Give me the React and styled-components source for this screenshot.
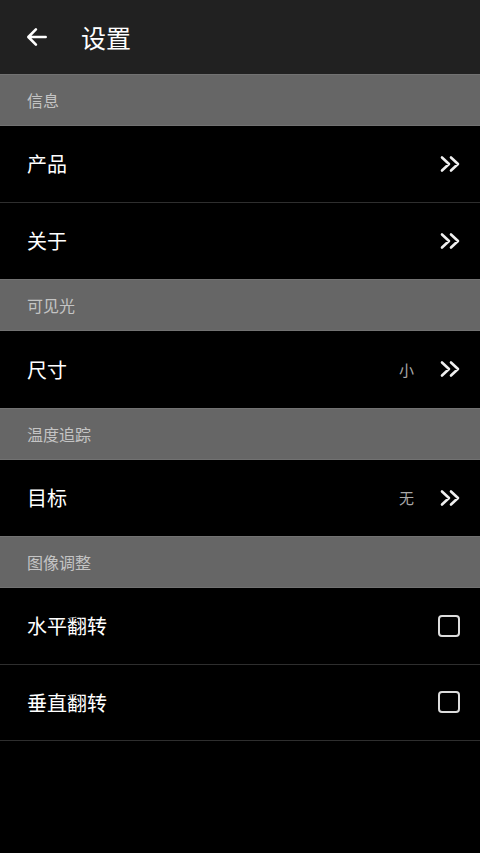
import React from "react";
import styled, { createGlobalStyle } from "styled-components";

const Global = createGlobalStyle`
  html, body { margin: 0; padding: 0; background: #000; }
  body { font-family: "Noto Sans CJK SC", "Noto Sans", sans-serif; }
  #root { min-height: 853px; background: #000; }
`;

const Page = styled.div`
  width: 480px;
  min-height: 853px;
  background: #000;
  display: flex;
  flex-direction: column;
`;

const Header = styled.header`
  height: 74px;
  background: #212121;
  display: flex;
  align-items: center;
  padding-left: 24px;
  gap: 31px;
  box-sizing: border-box;
`;

const Title = styled.h1`
  margin: 0;
  color: #fff;
  font-size: 25px;
  font-weight: 400;
  line-height: 1;
`;

const Section = styled.div`
  height: 52px;
  box-sizing: border-box;
  background: #666;
  border-top: 1px solid #727272;
  border-bottom: 1px solid #727272;
  display: flex;
  align-items: center;
  padding-left: 27px;
  color: #c4c4c4;
  font-size: 16px;
`;

const Row = styled.div`
  height: 76.5px;
  box-sizing: border-box;
  display: flex;
  align-items: center;
  padding: 0 17px 0 27px;
  border-bottom: ${(p) => (p.$last ? "none" : "1px solid #2e2e2e")};
  color: #fff;
  font-size: 20px;
`;

const Label = styled.span`
  flex: 1;
`;

const Value = styled.span`
  color: #a8a8a8;
  font-size: 15px;
  margin-right: 25px;
`;

const BackIcon = () => (
  <svg width="26" height="26" viewBox="0 0 24 24" fill="none" stroke="#fff" strokeWidth="2.4" strokeLinecap="round" strokeLinejoin="round">
    <path d="M20 12H4.5M11 5l-7 7 7 7" />
  </svg>
);

const Chevrons = () => (
  <svg width="24" height="18" viewBox="0 0 24 18" fill="none" stroke="#f0f0f0" strokeWidth="2.6" strokeLinecap="round" strokeLinejoin="round">
    <path d="M3 2.5l7 6.5-7 6.5M12 2.5l7 6.5-7 6.5" />
  </svg>
);

const Box = styled.span`
  width: 18px;
  height: 18px;
  border: 2px solid #dcdcdc;
  border-radius: 4px;
  margin-right: 3px;
`;

const data = [
  { section: "信息", rows: [{ label: "产品" }, { label: "关于" }] },
  { section: "可见光", rows: [{ label: "尺寸", value: "小" }] },
  { section: "温度追踪", rows: [{ label: "目标", value: "无" }] },
  {
    section: "图像调整",
    rows: [
      { label: "水平翻转", check: true },
      { label: "垂直翻转", check: true },
    ],
  },
];

export default function App() {
  return (
    <>
      <Global />
      <Page>
        <Header>
          <BackIcon />
          <Title>设置</Title>
        </Header>
        {data.map((s, si) => (
          <React.Fragment key={s.section}>
            <Section>{s.section}</Section>
            {s.rows.map((r, ri) => (
              <Row key={r.label} $last={ri === s.rows.length - 1 && si !== data.length - 1}>
                <Label>{r.label}</Label>
                {r.value && <Value>{r.value}</Value>}
                {r.check ? <Box /> : <Chevrons />}
              </Row>
            ))}
          </React.Fragment>
        ))}
      </Page>
    </>
  );
}
